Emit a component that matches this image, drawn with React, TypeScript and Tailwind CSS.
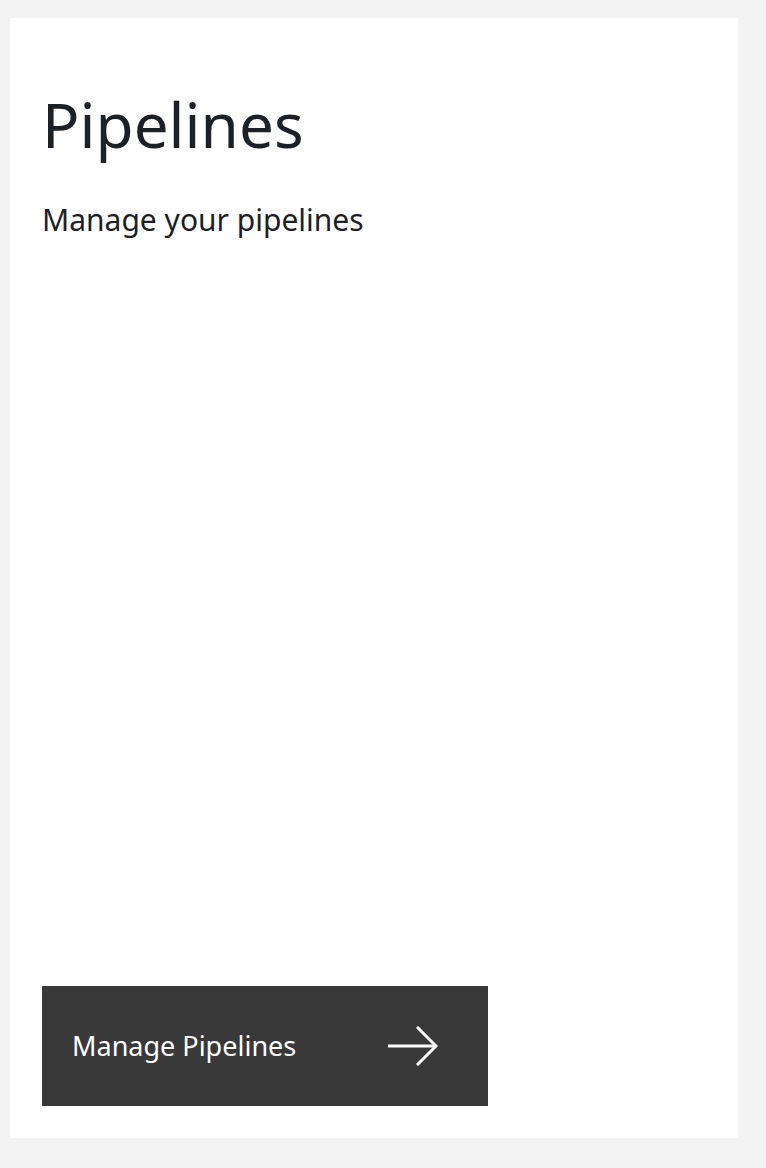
export default function App() {
    return (
        <div className="min-h-[1168px] bg-[#f3f3f3] pt-[18px] pl-[10px] pr-[28px] pb-[30px]">
            <div
                className="flex h-[1120px] w-[728px] flex-col bg-white px-[32px] pb-[32px] text-[#1d2126]"
                style={{ fontFamily: '"Noto Sans", "Open Sans", sans-serif' }}
            >
                <h1 className="mt-[64px] text-[62px] leading-[84px] font-normal">Pipelines</h1>
                <p className="mt-[36px] text-[30px] leading-[36px]">Manage your pipelines</p>

                <button className="mt-auto flex h-[120px] w-[446px] items-center justify-between bg-[#393939] pl-[30px] pr-[50px] text-left text-white">
                    <span className="text-[27px] leading-[32px]">Manage Pipelines</span>
                    <svg width="50" height="40" viewBox="0 0 50 40" fill="none" stroke="white" strokeWidth="3">
                        <path d="M0 20 H47" />
                        <path d="M29 1 L48 20 L29 39" />
                    </svg>
                </button>
            </div>
        </div>
    );
}
